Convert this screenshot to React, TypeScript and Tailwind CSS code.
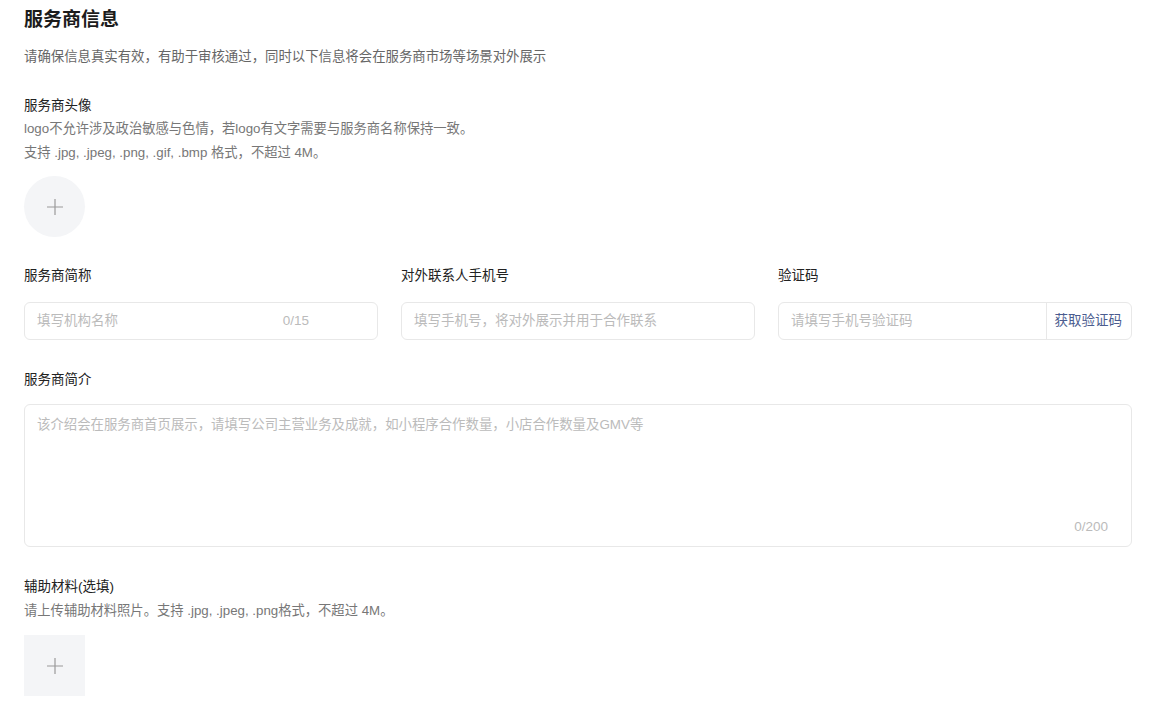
import { useState } from "react";

const font = { fontFamily: '"Liberation Sans", "Noto Sans CJK SC", sans-serif' };

function Plus() {
    return (
        <svg width="18" height="18" viewBox="0 0 18 18" fill="none">
            <path d="M9 1v16M1 9h16" stroke="#9a9a9a" strokeWidth="1.2" />
        </svg>
    );
}

function Label({ children }: { children: React.ReactNode }) {
    return <div className="text-[13.5px] leading-5 text-[#222]">{children}</div>;
}

export default function App() {
    const [name, setName] = useState("");
    const [intro, setIntro] = useState("");

    return (
        <div className="min-h-screen bg-white px-6 pt-[6px]" style={font}>
            <h1 className="text-[19px] leading-7 font-semibold text-[#1c1c1c]">服务商信息</h1>
            <p className="mt-3 text-[13.4px] leading-[22px] text-[#666]">
                请确保信息真实有效，有助于审核通过，同时以下信息将会在服务商市场等场景对外展示
            </p>

            <div className="mt-7">
                <Label>服务商头像</Label>
                <div className="mt-px text-[13.3px] leading-6 text-[#777]">
                    <div>logo不允许涉及政治敏感与色情，若logo有文字需要与服务商名称保持一致。</div>
                    <div>支持 .jpg, .jpeg, .png, .gif, .bmp 格式，不超过 4M。</div>
                </div>
                <button className="mt-[11px] flex h-[61px] w-[61px] items-center justify-center rounded-full bg-[#f4f5f7]">
                    <Plus />
                </button>
            </div>

            <div className="mt-[29px] grid grid-cols-3 gap-[23px]">
                <div>
                    <Label>服务商简称</Label>
                    <div className="mt-4 flex h-[38px] items-center rounded-md border border-[#e8e8e8] pl-3 pr-[68px]">
                        <input
                            value={name}
                            maxLength={15}
                            onChange={(e) => setName(e.target.value)}
                            placeholder="填写机构名称"
                            className="min-w-0 flex-1 bg-transparent text-[13.5px] text-[#333] outline-none placeholder:text-[#bbb]"
                        />
                        <span className="text-[13.5px] text-[#bbb]">{name.length}/15</span>
                    </div>
                </div>
                <div>
                    <Label>对外联系人手机号</Label>
                    <div className="mt-4 flex h-[38px] items-center rounded-md border border-[#e8e8e8] px-3">
                        <input
                            placeholder="填写手机号，将对外展示并用于合作联系"
                            className="min-w-0 flex-1 bg-transparent text-[13.5px] text-[#333] outline-none placeholder:text-[#bbb]"
                        />
                    </div>
                </div>
                <div>
                    <Label>验证码</Label>
                    <div className="mt-4 flex h-[38px] items-center rounded-md border border-[#e8e8e8]">
                        <input
                            placeholder="请填写手机号验证码"
                            className="min-w-0 flex-1 bg-transparent px-3 text-[13.5px] text-[#333] outline-none placeholder:text-[#bbb]"
                        />
                        <button className="flex h-full items-center border-l border-[#e8e8e8] pl-2 pr-[9px] text-[13.5px] text-[#4b5c8f]">
                            获取验证码
                        </button>
                    </div>
                </div>
            </div>

            <div className="mt-[30px]">
                <Label>服务商简介</Label>
                <div className="mt-[14px] flex h-[143px] flex-col rounded-md border border-[#e8e8e8] px-3 pt-[9px] pb-[9px]">
                    <textarea
                        value={intro}
                        maxLength={200}
                        onChange={(e) => setIntro(e.target.value)}
                        placeholder="该介绍会在服务商首页展示，请填写公司主营业务及成就，如小程序合作数量，小店合作数量及GMV等"
                        className="flex-1 resize-none bg-transparent text-[13.4px] leading-[22px] text-[#333] outline-none placeholder:text-[#bbb]"
                    />
                    <div className="self-end pr-[11px] text-[13.5px] leading-5 text-[#bbb]">{intro.length}/200</div>
                </div>
            </div>

            <div className="mt-[30px] pb-6">
                <Label>辅助材料(选填)</Label>
                <div className="mt-[2px] text-[13.3px] leading-6 text-[#777]">
                    请上传辅助材料照片。支持 .jpg, .jpeg, .png格式，不超过 4M。
                </div>
                <button className="mt-3 flex h-[61px] w-[61px] items-center justify-center bg-[#f4f5f7]">
                    <Plus />
                </button>
            </div>
        </div>
    );
}
